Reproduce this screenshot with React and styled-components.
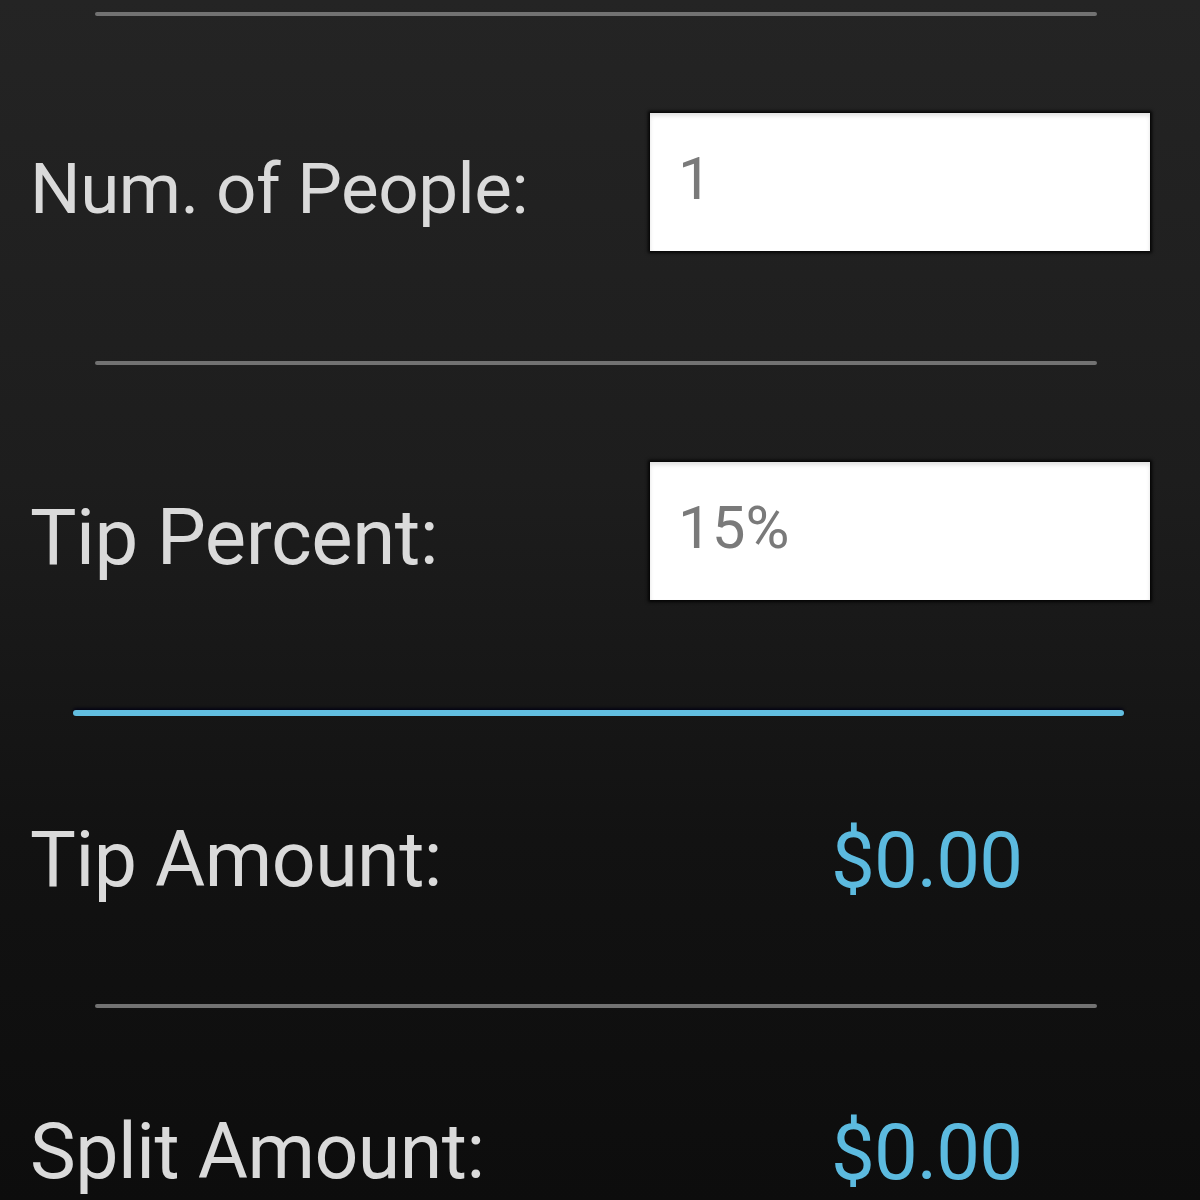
import { useState } from "react";
import styled, { createGlobalStyle } from "styled-components";

const GlobalStyle = createGlobalStyle`
  html, body {
    margin: 0;
    padding: 0;
    background: #111;
  }
  body {
    font-family: Roboto, "Liberation Sans", sans-serif;
  }
`;

const App = () => {
  const [people, setPeople] = useState("1");
  const [percent, setPercent] = useState("15%");

  return (
    <>
      <GlobalStyle />
      <Screen>
        <Divider />
        <InputRow>
          <Label size={71}>Num. of People:</Label>
          <Field value={people} onChange={(e) => setPeople(e.target.value)} />
        </InputRow>
        <Divider />
        <InputRow>
          <Label size={78}>Tip Percent:</Label>
          <Field value={percent} onChange={(e) => setPercent(e.target.value)} />
        </InputRow>
        <AccentDivider />
        <ResultRow>
          <Label size={77}>Tip Amount:</Label>
          <Amount>$0.00</Amount>
        </ResultRow>
        <Divider />
        <ResultRow>
          <Label size={77}>Split Amount:</Label>
          <Amount>$0.00</Amount>
        </ResultRow>
      </Screen>
    </>
  );
};

const Screen = styled.div`
  width: 1200px;
  height: 1200px;
  overflow: hidden;
  padding-top: 12px;
  box-sizing: border-box;
  display: flex;
  flex-direction: column;
  background: linear-gradient(to bottom, #242424 0%, #1d1d1d 40%, #121212 70%, #0d0d0d 100%);
`;

const Divider = styled.div`
  height: 4px;
  margin: 0 103px 0 95px;
  background-color: #727272;
  border-radius: 2px;
  flex-shrink: 0;
`;

const AccentDivider = styled.div`
  height: 6px;
  margin: 0 76px 0 73px;
  background-color: #62bee0;
  border-radius: 3px;
  flex-shrink: 0;
  box-shadow: 0 -2px 3px rgba(0, 0, 20, 0.8);
`;

const InputRow = styled.div`
  height: 345px;
  display: flex;
  align-items: center;
  justify-content: space-between;
  padding: 0 50px 0 30px;
  box-sizing: border-box;
  flex-shrink: 0;
`;

const ResultRow = styled.div`
  height: 288px;
  display: flex;
  align-items: center;
  padding: 0 0 0 30px;
  box-sizing: border-box;
  flex-shrink: 0;
`;

const Label = styled.span`
  color: #dadada;
  font-size: ${(p) => p.size}px;
  letter-spacing: -0.5px;
  white-space: nowrap;
`;

const Field = styled.input`
  width: 500px;
  height: 138px;
  margin-bottom: 14px;
  box-sizing: border-box;
  border: none;
  outline: none;
  padding: 0 0 6px 28px;
  background: #fff;
  color: #7a7a7a;
  font-family: Roboto, "Liberation Sans", sans-serif;
  font-size: 60px;
  box-shadow: 0 0 3px 2px rgba(0, 0, 0, 0.85), inset 0 3px 4px rgba(0, 0, 0, 0.12);
`;

const Amount = styled.span`
  margin-left: auto;
  margin-right: 178px;
  color: #5cbadf;
  font-size: 78px;
  letter-spacing: -1px;
`;

export default App;
